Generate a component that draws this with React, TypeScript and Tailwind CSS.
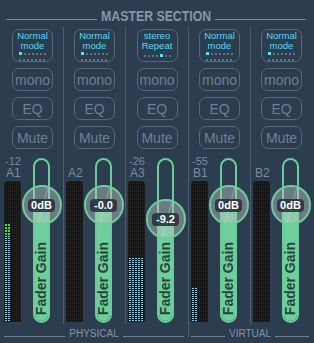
import React from "react";

type Strip = {
  name: string;
  level: string;
  mode: string[];
  rows: number;
  lit: number;
  gain: string;
  knobTop: string;
  spacer: string;
  colW: string;
  fills: string[];
};

const BLUE =
  "[background-image:repeating-linear-gradient(90deg,transparent_0_2px,#141414_2px_3px),repeating-linear-gradient(180deg,#8fcbe6_0_1px,#141414_1px_2px)]";
const GREEN =
  "[background-image:repeating-linear-gradient(90deg,transparent_0_2px,#141414_2px_3px),repeating-linear-gradient(180deg,#3ee83a_0_2px,#141414_2px_3px)]";

const strips: Strip[] = [
  { name: "A1", level: "-12", mode: ["Normal", "mode"], rows: 2, lit: 0, gain: "0dB", knobTop: "top-[25px]", spacer: "h-[45px]", colW: "w-[61px]", fills: [`h-[12px] w-[6px] ${GREEN}`, `h-[85px] w-[6px] ${BLUE}`] },
  { name: "A2", level: "", mode: ["Normal", "mode"], rows: 2, lit: 0, gain: "-0.0", knobTop: "top-[25px]", spacer: "h-[45px]", colW: "w-[61px]", fills: [] },
  { name: "A3", level: "-26", mode: ["stereo", "Repeat"], rows: 1, lit: 4, gain: "-9.2", knobTop: "top-[39px]", spacer: "h-[59px]", colW: "w-[62px]", fills: [`h-[63px] w-full ${BLUE}`] },
  { name: "B1", level: "-55", mode: ["Normal", "mode"], rows: 2, lit: 0, gain: "0dB", knobTop: "top-[25px]", spacer: "h-[45px]", colW: "w-[61px]", fills: [`h-[33px] w-[5px] ${BLUE}`] },
  { name: "B2", level: "", mode: ["Normal", "mode"], rows: 2, lit: 0, gain: "0dB", knobTop: "top-[25px]", spacer: "h-[45px]", colW: "w-[61px]", fills: [] },
];

const DotRow = ({ lit }: { lit: number }) => (
  <div className="flex items-center gap-[2px] h-[3px]">
    {[0, 1, 2, 3, 4, 5, 6].map((i) =>
      i === lit ? (
        <span key={i} className="w-[3px] h-[3px] bg-[#55def7]" />
      ) : (
        <span key={i} className="w-[2px] h-[2px] bg-[#617386]" />
      )
    )}
  </div>
);

const SmallButton = ({ label }: { label: string }) => (
  <div className="w-[41px] h-[23px] rounded-[7px] border-[1.5px] border-[#566879] flex items-center justify-center text-[14px] leading-none text-[#6c8093]">
    {label}
  </div>
);

const Fader = ({ s }: { s: Strip }) => (
  <div className="relative mt-[2px] w-[17px] h-[165px] rounded-full border-2 border-[#6ccb9a] flex flex-col">
    <div className={`${s.spacer} shrink-0`} />
    <div className="flex-1 bg-[#6ecf9d] rounded-b-full flex items-end justify-center pb-[6px]">
      <span className="[writing-mode:vertical-rl] rotate-180 text-[14px] font-bold leading-[13px] text-[#26443a] whitespace-nowrap">
        Fader Gain
      </span>
    </div>
    {/* knob */}
    <div
      className={`absolute ${s.knobTop} left-1/2 -translate-x-1/2 w-[40px] h-[40px] rounded-full border-2 border-[#72ca9c] bg-[#b8c7c0]/45 flex items-center justify-center overflow-hidden`}
    >
      <svg className="absolute inset-0" width="36" height="36" viewBox="0 0 36 36">
        <line x1="14" y1="36" x2="24" y2="0" stroke="#dfe8e4" strokeOpacity="0.25" strokeWidth="1.5" />
      </svg>
      <div className="relative min-w-[27px] h-[13px] px-[3px] rounded-[4px] bg-[#26343f]/90 flex items-center justify-center text-[11px] font-bold leading-none text-white">
        {s.gain}
      </div>
    </div>
  </div>
);

const StripCol = ({ s }: { s: Strip }) => (
  <div className={`${s.colW} flex flex-col items-center pt-[2px]`}>
    <div className="w-[41px] h-[33px] rounded-[7px] border-[1.5px] border-[#566879] flex flex-col items-center pt-[1px]">
      <div className="text-[9.5px] leading-[10px] text-[#55daf3] text-center">
        <div>{s.mode[0]}</div>
        <div>{s.mode[1]}</div>
      </div>
      {s.rows === 2 ? (
        <div className="flex flex-col gap-[3px] mt-[1px]">
          <DotRow lit={s.lit} />
          <DotRow lit={-1} />
        </div>
      ) : (
        <div className="mt-[3px]">
          <DotRow lit={s.lit} />
        </div>
      )}
    </div>
    <div className="flex flex-col gap-[6px] mt-[6px]">
      <SmallButton label="mono" />
      <SmallButton label="EQ" />
      <SmallButton label="Mute" />
    </div>
    <div className="flex self-stretch pl-[2px] mt-[7px] gap-[12px]">
      <div className="flex flex-col w-[17px]">
        <div className="h-[11px] text-[11px] leading-[11px] text-[#7a8b9c] pl-[1px] whitespace-nowrap">{s.level}</div>
        <div className="h-[12px] text-[12px] leading-[12px] text-[#7a8b9c] pl-[2px]">{s.name}</div>
        <div className="mt-[2px] h-[141px] rounded-t-[3px] bg-[#141414] p-[1px] flex flex-col justify-end [background-image:repeating-linear-gradient(90deg,transparent_0_1px,#141414_1px_2px),repeating-linear-gradient(180deg,#2a2a2a_0_1px,#141414_1px_2px)]">
          {s.fills.map((f, i) => (
            <div key={i} className={f} />
          ))}
        </div>
      </div>
      <Fader s={s} />
    </div>
  </div>
);

const Divider = () => <div className="w-px bg-[#4c5e70]" />;

const Caption = ({ label }: { label: string }) => (
  <>
    <div className="flex-1 h-px bg-[#6f7f8f] mb-[1px]" />
    <span className="text-[10px] leading-[8px] text-[#8493a2]">{label}</span>
    <div className="flex-1 h-px bg-[#6f7f8f] mb-[1px]" />
  </>
);

export default function App() {
  return (
    <div className="w-[314px] h-[343px] bg-[#2c3d4f] overflow-hidden font-['Liberation_Sans',Arial,sans-serif] select-none">
      {/* Header */}
      <div className="flex items-end h-[27px] pl-[6px] pr-[8px] pb-[6px] gap-[3px]">
        <div className="flex-1 h-px bg-[#7b8a99] mb-[1px]" />
        <div className="w-[112px] flex justify-center">
          <span className="inline-block scale-x-[0.82] whitespace-nowrap text-[15px] font-bold leading-[11px] text-[#8796a5]">
            MASTER SECTION
          </span>
        </div>
        <div className="flex-1 h-px bg-[#7b8a99] mb-[1px]" />
      </div>

      {/* Strips */}
      <div className="flex pl-[2px] h-[297px]">
        <StripCol s={strips[0]} />
        <Divider />
        <StripCol s={strips[1]} />
        <Divider />
        <StripCol s={strips[2]} />
        <Divider />
        <StripCol s={strips[3]} />
        <Divider />
        <StripCol s={strips[4]} />
      </div>

      {/* Footer */}
      <div className="flex items-start h-[19px]">
        <div className="w-[188px] h-[15px] flex items-end gap-[4px] px-[4px] pb-[1px]">
          <Caption label="PHYSICAL" />
        </div>
        <div className="w-px h-[13px] bg-[#4c5e70]" />
        <div className="flex-1 h-[15px] flex items-end gap-[4px] pl-[2px] pr-[5px] pb-[1px]">
          <Caption label="VIRTUAL" />
        </div>
      </div>
    </div>
  );
}
